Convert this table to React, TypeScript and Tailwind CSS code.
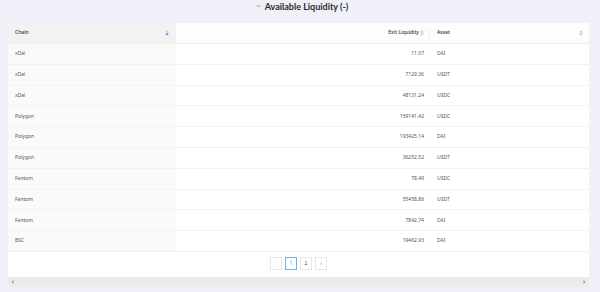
import React from "react";

type Row = { chain: string; amount: string; asset: string };

const rows: Row[] = [
  { chain: "xDai", amount: "11.07", asset: "DAI" },
  { chain: "xDai", amount: "7129.36", asset: "USDT" },
  { chain: "xDai", amount: "48131.24", asset: "USDC" },
  { chain: "Polygon", amount: "159141.42", asset: "USDC" },
  { chain: "Polygon", amount: "193425.14", asset: "DAI" },
  { chain: "Polygon", amount: "36252.52", asset: "USDT" },
  { chain: "Fantom", amount: "78.49", asset: "USDC" },
  { chain: "Fantom", amount: "55458.86", asset: "USDT" },
  { chain: "Fantom", amount: "7842.74", asset: "DAI" },
  { chain: "BSC", amount: "19462.93", asset: "DAI" },
];

const SortIcon: React.FC<{ active?: boolean }> = ({ active }) => (
  <svg width="4" height="6" viewBox="0 0 4 6" className="shrink-0">
    <path d="M2 0.3 L3.6 2.4 H0.4 Z" fill="#bfbfbf" />
    <path d="M2 5.7 L3.6 3.6 H0.4 Z" fill={active ? "#1890ff" : "#bfbfbf"} />
  </svg>
);

const App: React.FC = () => {
  return (
    <div
      className="w-[600px] h-[292px] bg-[#f0f0f8] overflow-hidden text-[#333]"
      style={{ fontFamily: "'Noto Sans', 'Open Sans', sans-serif" }}
    >
      <div className="h-[23px] flex justify-center">
        <div className="flex items-center gap-[4px] h-[12px] ml-[4px]">
          <svg width="5" height="4" viewBox="0 0 5 4">
            <path d="M0.5 1 L2.5 3 L4.5 1" stroke="#777" strokeWidth="0.7" fill="none" />
          </svg>
          <span className="text-[9px] font-bold leading-none font-['Lato',sans-serif] text-[#2a2a2a]">
            Available Liquidity (-)
          </span>
        </div>
      </div>

      <div className="ml-2 w-[581px] bg-white">
        <div className="flex h-[21px] border-b border-[#eeeeee] text-[5px] font-medium text-[#333]">
          <div className="w-[168px] bg-[#f2f2f2] flex items-center justify-between pl-[7px] pr-[7px]">
            <span>Chain</span>
            <SortIcon active />
          </div>
          <div className="w-[254px] bg-[#fdfdfd] flex items-center justify-end gap-[1px] pr-[6px] relative">
            <span>Exit Liquidity</span>
            <SortIcon />
            <div className="absolute right-0 top-[6px] h-[9px] w-px bg-[#ececec]" />
          </div>
          <div className="flex-1 bg-[#fdfdfd] flex items-center justify-between pl-[7px] pr-[6px]">
            <span>Asset</span>
            <SortIcon />
          </div>
        </div>

        {rows.map((r, i) => (
          <div
            key={i}
            className="flex h-[20.8px] border-b border-[#f2f2f2] text-[5px] text-[#555]"
          >
            <div className="w-[168px] bg-[#fafafa] flex items-center pl-[7px]">{r.chain}</div>
            <div className="w-[254px] flex items-center justify-end pr-[6px]">{r.amount}</div>
            <div className="flex-1 flex items-center pl-[7px]">{r.asset}</div>
          </div>
        ))}

        <div className="h-[25px] flex justify-center items-start pt-[5px] gap-[3px] text-[5px] text-[#555]">
          <div className="w-[12px] h-[13px] border border-[#e6e6e6] flex items-center justify-center text-[#ccc]">
            ‹
          </div>
          <div className="w-[12px] h-[13px] border border-[#6cb3f2] text-[#1890ff] flex items-center justify-center">
            1
          </div>
          <div className="w-[12px] h-[13px] border border-[#e6e6e6] flex items-center justify-center">
            2
          </div>
          <div className="w-[12px] h-[13px] border border-[#e6e6e6] flex items-center justify-center">
            ›
          </div>
        </div>
      </div>

      <div className="ml-2 w-[581px] h-[10px] bg-[#ececec] flex items-center justify-between px-[3px]">
        <svg width="3" height="4" viewBox="0 0 3 4">
          <path d="M2.5 0 L0.5 2 L2.5 4 Z" fill="#999" />
        </svg>
        <svg width="3" height="4" viewBox="0 0 3 4">
          <path d="M0.5 0 L2.5 2 L0.5 4 Z" fill="#999" />
        </svg>
      </div>
    </div>
  );
};

export default App;
